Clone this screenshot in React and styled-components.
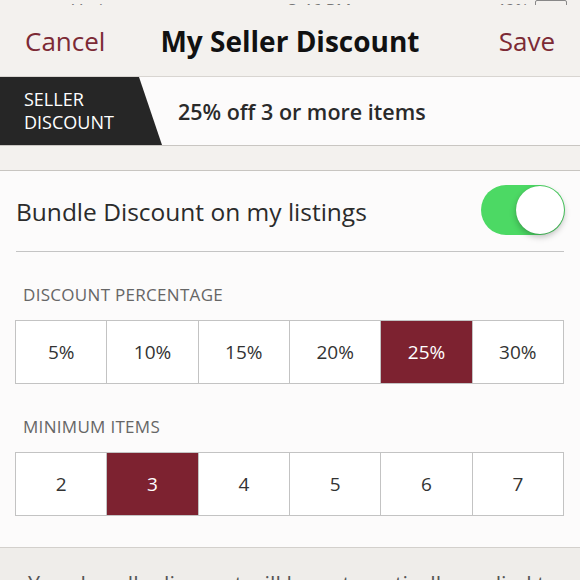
import React from "react";
import styled, { createGlobalStyle } from "styled-components";

const GlobalStyle = createGlobalStyle`
  html, body {
    margin: 0;
    padding: 0;
    background: #f3f1ee;
  }
  * { box-sizing: border-box; }
`;

const Page = styled.div`
  width: 580px;
  height: 580px;
  overflow: hidden;
  background: #f3f1ee;
  font-family: "Open Sans", Lato, sans-serif;
  color: #2b2b2b;
  display: flex;
  flex-direction: column;
`;

const StatusBar = styled.div`
  height: 5px;
  overflow: hidden;
  display: grid;
  grid-template-columns: 1fr auto 1fr;
  align-items: end;
  padding: 0 13px 0 72px;
  font-size: 17px;
  color: #777;
  flex-shrink: 0;
`;

const StatusText = styled.span`
  line-height: 9px;
  justify-self: ${(p) => p.$align || "start"};
`;

const Battery = styled.span`
  display: inline-block;
  width: 32px;
  height: 14px;
  border: 1px solid #888;
  border-radius: 2px;
  margin-left: 6px;
  vertical-align: bottom;
`;

const NavBar = styled.div`
  height: 72px;
  flex-shrink: 0;
  display: grid;
  grid-template-columns: 1fr auto 1fr;
  align-items: center;
  padding: 0 25px 0 25px;
  border-bottom: 1px solid #d8d5d1;
`;

const NavButton = styled.span`
  font-size: 26px;
  color: #7c2a35;
  justify-self: ${(p) => (p.$right ? "end" : "start")};
`;

const Title = styled.h1`
  margin: 0;
  font-size: 28px;
  font-weight: 700;
  color: #111;
`;

const Banner = styled.div`
  height: 69px;
  flex-shrink: 0;
  display: flex;
  align-items: center;
  background: #fcfbfb;
  border-bottom: 1px solid #c9c6c2;
`;

const Tag = styled.div`
  width: 162px;
  align-self: stretch;
  background: #262626;
  clip-path: polygon(0 0, 139px 0, 162px 100%, 0 100%);
  color: #fff;
  font-size: 18px;
  line-height: 23px;
  padding-left: 24px;
  display: flex;
  flex-direction: column;
  justify-content: center;
`;

const BannerText = styled.div`
  margin-left: 16px;
  font-size: 21.5px;
  font-weight: 600;
  color: #2a2a2a;
`;

const Gap = styled.div`
  height: 25px;
  flex-shrink: 0;
  border-bottom: 1px solid #c8c5c1;
`;

const Section = styled.div`
  background: #fcfbfb;
  padding: 0 16px 31px 15px;
  border-bottom: 1px solid #d3d0cc;
  flex-shrink: 0;
`;

const ToggleRow = styled.div`
  height: 81px;
  display: flex;
  align-items: center;
  justify-content: space-between;
  border-bottom: 1px solid #c4c4c4;
  margin-left: 1px;
`;

const ToggleLabel = styled.span`
  font-size: 24.5px;
  color: #2b2b2b;
`;

const Switch = styled.div`
  width: 84px;
  height: 50px;
  border-radius: 25px;
  background: #4cd964;
  position: relative;
  margin-right: -1px;
  margin-top: -2px;
`;

const Knob = styled.div`
  position: absolute;
  right: 1px;
  top: 1px;
  width: 48px;
  height: 48px;
  border-radius: 50%;
  background: #fff;
  box-shadow: 0 3px 6px rgba(0, 0, 0, 0.25), 0 0 1px rgba(0, 0, 0, 0.2);
`;

const Label = styled.div`
  height: 68px;
  padding: 32px 0 0 8px;
  font-size: 17px;
  line-height: 22px;
  letter-spacing: 0.3px;
  color: #666;
`;

const Options = styled.div`
  display: grid;
  grid-template-columns: repeat(6, 1fr);
  height: 64px;
  border: 1px solid #c3c3c3;
  border-right: none;
`;

const Option = styled.div`
  display: flex;
  align-items: center;
  justify-content: center;
  border-right: 1px solid #c3c3c3;
  font-size: 19px;
  color: ${(p) => (p.$active ? "#fff" : "#333")};
  background: ${(p) => (p.$active ? "#7d2230" : "#fff")};
`;

const Footer = styled.div`
  flex: 1;
  padding: 21px 0 0 28px;
  font-size: 21.5px;
  color: #555;
  white-space: nowrap;
  background: #efedea;
`;

const percents = ["5%", "10%", "15%", "20%", "25%", "30%"];
const items = ["2", "3", "4", "5", "6", "7"];

export default function App() {
  return (
    <Page>
      <GlobalStyle />
      <StatusBar>
        <StatusText>Verizon ᯤ</StatusText>
        <StatusText $align="center">3:46 PM</StatusText>
        <StatusText $align="end">
          ➤ 49%
          <Battery />
        </StatusText>
      </StatusBar>
      <NavBar>
        <NavButton>Cancel</NavButton>
        <Title>My Seller Discount</Title>
        <NavButton $right>Save</NavButton>
      </NavBar>
      <Banner>
        <Tag>
          <span>SELLER</span>
          <span>DISCOUNT</span>
        </Tag>
        <BannerText>25% off 3 or more items</BannerText>
      </Banner>
      <Gap />
      <Section>
        <ToggleRow>
          <ToggleLabel>Bundle Discount on my listings</ToggleLabel>
          <Switch>
            <Knob />
          </Switch>
        </ToggleRow>
        <Label>DISCOUNT PERCENTAGE</Label>
        <Options>
          {percents.map((p) => (
            <Option key={p} $active={p === "25%"}>
              {p}
            </Option>
          ))}
        </Options>
        <Label>MINIMUM ITEMS</Label>
        <Options>
          {items.map((n) => (
            <Option key={n} $active={n === "3"}>
              {n}
            </Option>
          ))}
        </Options>
      </Section>
      <Footer>Your bundle discount will be automatically applied to</Footer>
    </Page>
  );
}
